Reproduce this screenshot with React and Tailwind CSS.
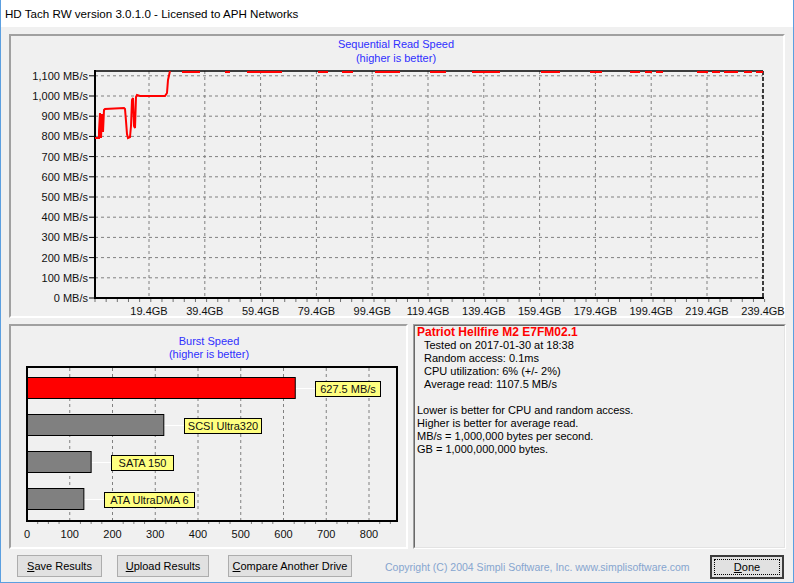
import React from 'react';

const FONT = "'Liberation Sans', Arial, sans-serif";

const yLevels = [0, 100, 200, 300, 400, 500, 600, 700, 800, 900, 1000, 1100];
const yOf = v => 298 - v * 0.202;
const xGrid = Array.from({ length: 11 }, (_, k) => 149 + k * 55.8);
const xLabels = ['19.4GB', '39.4GB', '59.4GB', '79.4GB', '99.4GB', '119.4GB', '139.4GB', '159.4GB', '179.4GB', '199.4GB', '219.4GB', '239.4GB'];

const readPts = [
  [95, 138], [99, 138], [99, 131], [100, 113], [101, 138], [102, 114], [103, 132], [104, 110], [105, 109],
  [124, 108], [125, 109], [126, 121], [127, 134], [128, 138], [130, 137], [131, 126], [132, 100], [133, 98],
  [134, 126], [135, 128], [136, 97], [137, 95], [140, 96], [150, 96], [165, 96], [167, 93], [168, 80], [170, 71],
];

const topDashes = [[182, 200], [225, 230], [247, 282], [318, 328], [342, 353], [375, 400], [430, 446], [472, 500], [541, 560], [590, 602], [630, 640], [645, 652], [656, 663], [697, 708], [712, 720], [724, 738], [744, 752], [756, 763]];

function ReadChart() {
  return (
    <svg width="772" height="280" viewBox="11 36 772 280" overflow="visible" style={{ fontFamily: FONT, overflow: 'visible' }}>
      <text x="396" y="48" fontSize="11" fill="#2f2fff" textAnchor="middle">Sequential Read Speed</text>
      <text x="396" y="62" fontSize="11" fill="#2f2fff" textAnchor="middle">(higher is better)</text>

      {yLevels.slice(1).map(v => (
        <line key={v} x1="95" x2="763" y1={yOf(v)} y2={yOf(v)} stroke="#808080" strokeDasharray="3 3" />
      ))}
      {xGrid.map(x => (
        <line key={x} x1={x} x2={x} y1="71" y2="298" stroke="#808080" strokeDasharray="3 3" />
      ))}
      {Array.from({ length: 61 }, (_, i) => 95 + i * 11.16).map(x => (
        <line key={x} x1={x} x2={x} y1="299" y2="302" stroke="#707070" />
      ))}

      {yLevels.map(v => (
        <g key={v}>
          <line x1="89" x2="95" y1={yOf(v)} y2={yOf(v)} stroke="#000" />
          <text x="88" y={yOf(v) + 4} fontSize="11" textAnchor="end" fill="#111">
            {v.toLocaleString('en-US')} MB/s
          </text>
        </g>
      ))}
      {xLabels.map((l, i) => (
        <text key={l} x={i < 11 ? xGrid[i] : 763} y="315" fontSize="11" textAnchor="middle" fill="#111">{l}</text>
      ))}

      {/* axes */}
      <line x1="95" x2="763" y1="71" y2="71" stroke="#000" strokeWidth="1.5" />
      <line x1="763" x2="763" y1="71" y2="298" stroke="#000" strokeWidth="1.5" strokeDasharray="4 2" />
      <line x1="95" x2="95" y1="70" y2="299" stroke="#000" strokeWidth="2" />
      <line x1="94" x2="764" y1="298" y2="298" stroke="#000" strokeWidth="2" />

      <polyline points={readPts.map(p => p.join(',')).join(' ')} fill="none" stroke="#ff0000" strokeWidth="2" />
      {topDashes.map(([a, b]) => (
        <line key={a} x1={a} x2={b} y1="72" y2="72" stroke="#ff0000" strokeWidth="2" />
      ))}
    </svg>
  );
}

const bx = v => 27 + v * 0.4275;
const bursts = [
  { v: 627.5, y: 377, fill: '#ff0000', label: '627.5 MB/s', lx: 315, lw: 65 },
  { v: 320, y: 414, fill: '#808080', label: 'SCSI Ultra320', lx: 184, lw: 77 },
  { v: 150, y: 451, fill: '#808080', label: 'SATA 150', lx: 111, lw: 62 },
  { v: 133, y: 488, fill: '#808080', label: 'ATA UltraDMA 6', lx: 104, lw: 90 },
];

function BurstChart() {
  const ticks = [100, 200, 300, 400, 500, 600, 700, 800];
  return (
    <svg width="395" height="221" viewBox="11 326 395 221" style={{ fontFamily: FONT }}>
      <text x="209" y="345" fontSize="11" fill="#2f2fff" textAnchor="middle">Burst Speed</text>
      <text x="209" y="358" fontSize="11" fill="#2f2fff" textAnchor="middle">(higher is better)</text>

      {ticks.map(v => (
        <line key={v} x1={bx(v)} x2={bx(v)} y1="368" y2="524" stroke="#808080" strokeDasharray="3 3" />
      ))}
      {Array.from({ length: 35 }, (_, i) => i * 25).filter(v => v % 100 !== 0).map(v => (
        <line key={v} x1={bx(v)} x2={bx(v)} y1="521" y2="524" stroke="#808080" />
      ))}
      <rect x="27" y="367" width="370" height="154" fill="none" stroke="#000" strokeWidth="2" />

      {bursts.map(b => (
        <g key={b.label}>
          <line x1={bx(b.v)} x2={b.lx} y1={b.y + 11.5} y2={b.y + 11.5} stroke="#fff" />
          <rect x="27.5" y={b.y + 0.5} width={bx(b.v) - 27.5} height="21" fill={b.fill} stroke="#000" />
          <rect x={b.lx + 0.5} y={b.y + 4.5} width={b.lw} height="15" fill="#ffff80" stroke="#000" />
          <text x={b.lx + b.lw / 2 + 0.5} y={b.y + 16} fontSize="11" fill="#111" textAnchor="middle">{b.label}</text>
        </g>
      ))}

      {[0, ...ticks].map(v => (
        <text key={v} x={bx(v)} y="538" fontSize="11" fill="#111" textAnchor="middle">{v}</text>
      ))}
    </svg>
  );
}

function Btn({ children, className = '' }) {
  return (
    <div className={`h-[22px] flex items-center justify-center bg-[#e1e1e1] border border-[#adadad] text-[11px] text-black ${className}`}>
      {children}
    </div>
  );
}

export default function App() {
  return (
    <div className="w-[794px] h-[583px] bg-[#f0f0f0] border-x border-b border-[#5b9fe0] flex flex-col overflow-hidden" style={{ fontFamily: FONT }}>
      <div className="h-[27px] bg-white flex items-center pl-[4px] text-[11.6px] text-black">
        HD Tach RW version 3.0.1.0 - Licensed to APH Networks
      </div>

      <div className="flex-1 flex flex-col pl-[8px] pt-[7px]">
        <div className="w-[776px] h-[284px] border-2 border-t-[#a0a0a0] border-l-[#a0a0a0] border-b-white border-r-white">
          <ReadChart />
        </div>

        <div className="flex mt-[6px]">
          <div className="w-[399px] h-[225px] border-2 border-t-[#a0a0a0] border-l-[#a0a0a0] border-b-white border-r-white">
            <BurstChart />
          </div>
          <div className="ml-[5px] w-[373px] h-[225px] border border-t-[#a0a0a0] border-l-[#a0a0a0] border-b-white border-r-white">
            <div className="h-full border border-t-[#696969] border-l-[#696969] border-b-[#e3e3e3] border-r-[#e3e3e3] pl-[2px] text-[11px] leading-[13px] text-black">
              <div className="font-bold text-[#ff0000] text-[12px]">Patriot Hellfire M2 E7FM02.1</div>
              <div className="pl-[7px]">
                <div>Tested on 2017-01-30 at 18:38</div>
                <div>Random access: 0.1ms</div>
                <div>CPU utilization: 6% (+/- 2%)</div>
                <div>Average read: 1107.5 MB/s</div>
              </div>
              <div className="h-[13px]" />
              <div>Lower is better for CPU and random access.</div>
              <div>Higher is better for average read.</div>
              <div>MB/s = 1,000,000 bytes per second.</div>
              <div>GB = 1,000,000,000 bytes.</div>
            </div>
          </div>
        </div>

        <div className="flex items-start mt-[6px]">
          <Btn className="ml-[8px] w-[85px]"><span className="underline">S</span>ave Results</Btn>
          <Btn className="ml-[15px] w-[92px]"><span className="underline">U</span>pload Results</Btn>
          <Btn className="ml-[19px] w-[124px]"><span className="underline">C</span>ompare Another Drive</Btn>
          <div className="ml-[33px] h-[26px] flex items-center text-[10.5px] text-[#86a5cf]">
            Copyright (C) 2004 Simpli Software, Inc. www.simplisoftware.com
          </div>
          <div className="ml-auto mr-[9px] w-[74px] h-[24px] border-2 border-[#3c3c3c] bg-[#e1e1e1] p-[2px] flex">
            <div className="flex-1 border border-dotted border-black flex items-center justify-center text-[11px] text-black">
              <span className="underline">D</span>one
            </div>
          </div>
        </div>
      </div>
    </div>
  );
}
